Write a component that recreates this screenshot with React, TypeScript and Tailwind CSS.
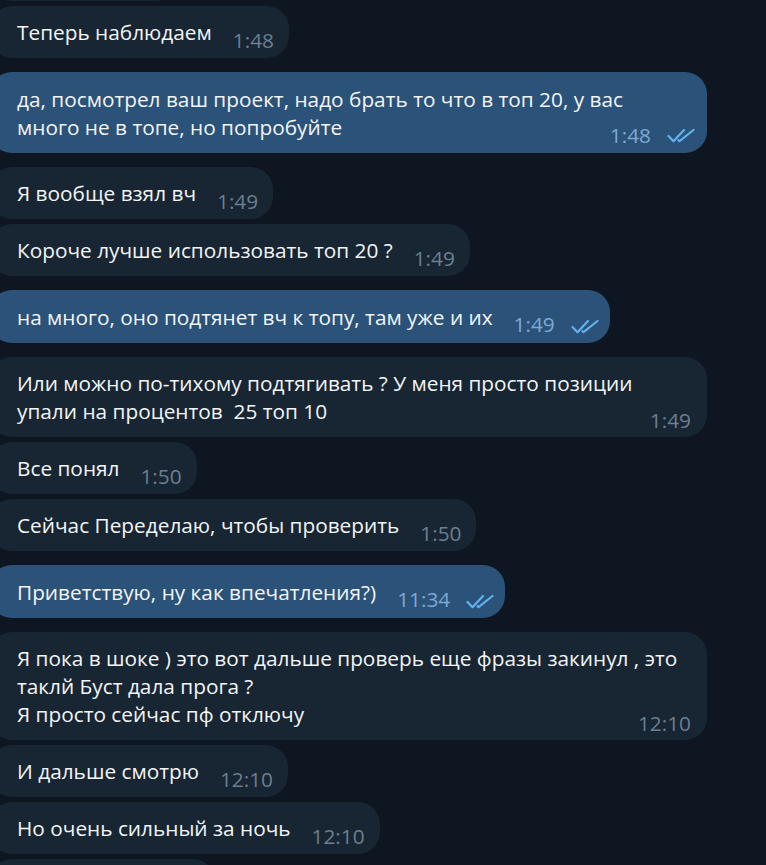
import React from "react";

type Msg = { lines: string[]; time: string; out?: boolean; gap: "s" | "l" };

const msgs: Msg[] = [
  { lines: ["Теперь наблюдаем"], time: "1:48", gap: "s" },
  { lines: ["да, посмотрел ваш проект, надо брать то что в топ 20, у вас", "много не в топе, но попробуйте"], time: "1:48", out: true, gap: "l" },
  { lines: ["Я вообще взял вч"], time: "1:49", gap: "l" },
  { lines: ["Короче лучше использовать топ 20 ?"], time: "1:49", gap: "s" },
  { lines: ["на много, оно подтянет вч к топу, там уже и их"], time: "1:49", out: true, gap: "l" },
  { lines: ["Или можно по-тихому подтягивать ? У меня просто позиции", "упали на процентов  25 топ 10"], time: "1:49", gap: "l" },
  { lines: ["Все понял"], time: "1:50", gap: "s" },
  { lines: ["Сейчас Переделаю, чтобы проверить"], time: "1:50", gap: "s" },
  { lines: ["Приветствую, ну как впечатления?)"], time: "11:34", out: true, gap: "l" },
  { lines: ["Я пока в шоке ) это вот дальше проверь еще фразы закинул , это", "таклй Буст дала прога ?", "Я просто сейчас пф отключу"], time: "12:10", gap: "l" },
  { lines: ["И дальше смотрю"], time: "12:10", gap: "s" },
  { lines: ["Но очень сильный за ночь"], time: "12:10", gap: "s" },
];

function Checks() {
  return (
    <svg width="28" height="15" viewBox="0 0 28 15" className="inline-block ml-[16px]" fill="none" stroke="#62b1ee" strokeWidth="2.2" strokeLinecap="round" strokeLinejoin="round">
      <path d="M1.5 8 L6.5 13.2 L17 2" />
      <path d="M11.5 12.2 L12.5 13.2 L26.5 2" />
    </svg>
  );
}

function Bubble({ m }: { m: Msg }) {
  const bg = m.out ? "bg-[#2b5278]" : "bg-[#182533]";
  const tc = m.out ? "text-[#7ea9d4]" : "text-[#6c7f90]";
  const mt = m.gap === "s" ? "mt-[4.5px]" : "mt-[14px]";
  if (m.lines.length > 1) {
    return (
      <div className={`${mt} ${bg} relative -ml-[10px] w-[717px] rounded-[22px] pl-[27px] pt-[12.5px] pb-[12px] leading-[28px]`}>
        {m.lines.map((l, i) => (
          <div key={i} className="whitespace-pre">{l}</div>
        ))}
        <div className={`absolute bottom-[7.5px] ${m.out ? "right-[12px]" : "right-[16px]"} flex items-baseline leading-[20px] ${tc}`}>
          <span>{m.time}</span>
          {m.out && <Checks />}
        </div>
      </div>
    );
  }
  return (
    <div className={`${mt} ${bg} self-start -ml-[10px] rounded-[22px] pl-[27px] ${m.out ? "pr-[11px]" : "pr-[15px]"} pt-[12.5px] pb-[12px] leading-[28px] whitespace-pre`}>
      <span>{m.lines[0]}</span>
      <span className={`relative top-[7.5px] inline-block ${m.out ? "ml-[21px]" : "ml-[21px]"} ${tc}`}>
        {m.time}
        {m.out && <Checks />}
      </span>
    </div>
  );
}

export default function App() {
  return (
    <div
      className="h-[865px] w-[766px] overflow-hidden bg-[#0e1621] text-[#f3f5f7] text-[20.8px]"
      style={{ fontFamily: '"Open Sans", "Noto Sans", sans-serif' }}
    >
      <div className="flex flex-col">
        <div className="-mt-[51px] -ml-[10px] h-[52px] w-[188px] rounded-[22px] bg-[#182533]" />
        {msgs.map((m, i) => (
          <Bubble key={i} m={m} />
        ))}
        <div className="mt-[4.5px] -ml-[10px] h-[52px] w-[225px] rounded-[22px] bg-[#182533]" />
      </div>
    </div>
  );
}
